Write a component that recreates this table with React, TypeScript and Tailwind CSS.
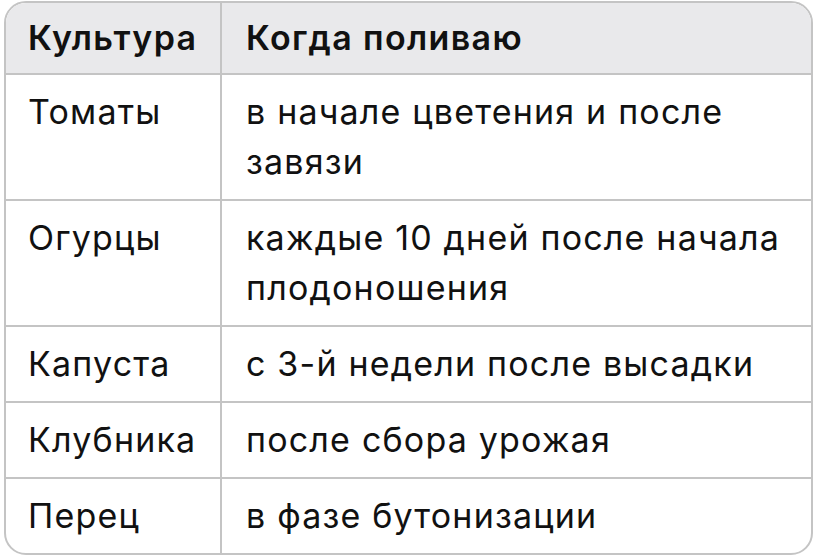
const rows: { crop: string; when: string }[] = [
  { crop: "Томаты", when: "в начале цветения и после завязи" },
  { crop: "Огурцы", when: "каждые 10 дней после начала плодоношения" },
  { crop: "Капуста", when: "с 3-й недели после высадки" },
  { crop: "Клубника", when: "после сбора урожая" },
  { crop: "Перец", when: "в фазе бутонизации" },
];

export default function App() {
  return (
    <div
      className="w-[818px] h-[556px] bg-white pl-[4px] pt-[1px]"
      style={{ fontFamily: "Inter, 'Noto Sans', sans-serif" }}
    >
      <div className="w-[809px] overflow-hidden rounded-[22px] border-2 border-[#c4c4c4] text-[34px] tracking-[0.035em] leading-[50px] text-[#111]">
        {/* Header */}
        <div className="grid grid-cols-[216px_1fr] bg-[#e9e9eb] border-b-2 border-[#c4c4c4] font-semibold tracking-[0.04em]">
          <div className="pl-[22px] py-[10px] border-r-2 border-[#c4c4c4]">Культура</div>
          <div className="px-[24px] py-[10px]">Когда поливаю</div>
        </div>

        {rows.map((row, i) => (
          <div
            key={i}
            className={
              i < rows.length - 1
                ? "grid grid-cols-[216px_1fr] border-b-2 border-[#c4c4c4]"
                : "grid grid-cols-[216px_1fr]"
            }
          >
            <div className="pl-[22px] py-[12px] border-r-2 border-[#c4c4c4]">{row.crop}</div>
            <div className="pl-[24px] pr-[14px] py-[12px]">{row.when}</div>
          </div>
        ))}
      </div>
    </div>
  );
}
